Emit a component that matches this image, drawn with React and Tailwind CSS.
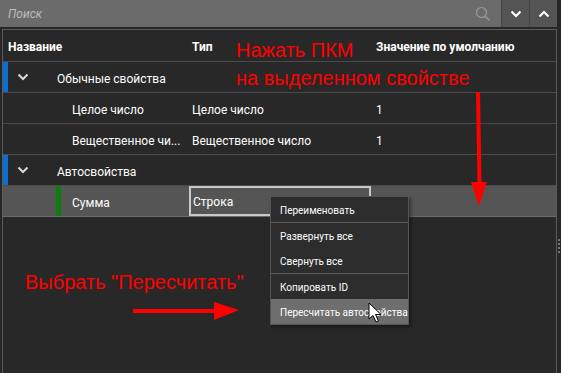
import React from "react";

const font = { fontFamily: 'Roboto, "Noto Sans", sans-serif' };

function Chevron({ up = false, className = "" }) {
  return (
    <svg width="12" height="8" viewBox="0 0 12 8" className={className}>
      <path
        d={up ? "M1.5 6.5 L6 2 L10.5 6.5" : "M1.5 1.5 L6 6 L10.5 1.5"}
        fill="none"
        stroke="currentColor"
        strokeWidth="2"
      />
    </svg>
  );
}

function GroupRow({ label }) {
  return (
    <div className="flex h-[31px] items-center border-b border-[#4a4a4a]">
      <div className="h-full w-[5px] bg-[#0a6fd3]" />
      <Chevron className="ml-[9px] text-[#d8d8d8]" />
      <span className="ml-[28px] pt-[3px] text-[12px] text-white">{label}</span>
    </div>
  );
}

function ChildRow({ name, type, value }) {
  return (
    <div className="grid h-[31px] grid-cols-[186px_184px_1fr] items-center border-b border-[#4a4a4a] pt-[3px] text-[12px] text-white">
      <span className="pl-[69px] whitespace-nowrap">{name}</span>
      <span className="pl-[3px] whitespace-nowrap">{type}</span>
      <span className="pl-[3px]">{value}</span>
    </div>
  );
}

function MenuItem({ children, active = false }) {
  return (
    <div
      className={
        "flex h-[25px] items-center whitespace-nowrap pl-[9px] pt-[1px] text-[10px] " +
        (active ? "bg-[#6e6e6e] text-white" : "text-white")
      }
    >
      {children}
    </div>
  );
}

export default function App() {
  return (
    <div
      className="relative flex h-[373px] w-[561px] flex-col overflow-hidden bg-[#262626]"
      style={font}
    >
      {/* search bar */}
      <div className="flex h-[27px] shrink-0">
        <div className="flex flex-1 items-center bg-[#6b6b6b] pl-[8px] pr-[10px]">
          <span className="flex-1 text-[12px] italic text-[#bdbdbd]">Поиск</span>
          <svg width="16" height="16" viewBox="0 0 16 16" className="text-[#9a9a9a]">
            <circle cx="6.5" cy="6.5" r="5" fill="none" stroke="currentColor" strokeWidth="1.2" />
            <path d="M10.2 10.2 L14.5 14.5" stroke="currentColor" strokeWidth="1.4" />
          </svg>
        </div>
        <div className="flex w-[28px] items-center justify-center border-l border-[#444] bg-[#555]">
          <Chevron className="text-white" />
        </div>
        <div className="flex w-[28px] items-center justify-center border-l border-[#444] bg-[#555]">
          <Chevron up className="text-white" />
        </div>
        <div className="w-[4px] bg-[#262626]" />
      </div>

      {/* panel */}
      <div className="ml-[2px] mt-[2px] flex w-[555px] flex-1 flex-col border-l border-r border-t border-[#5c5c5c] bg-[#282828]">
        <div className="grid h-[32px] grid-cols-[186px_184px_1fr] items-center border-b border-[#4a4a4a] pt-[3px] text-[12px] font-bold text-white">
          <span className="pl-[5px]">Название</span>
          <span className="pl-[3px]">Тип</span>
          <span className="pl-[3px]">Значение по умолчанию</span>
        </div>
        <GroupRow label="Обычные свойства" />
        <ChildRow name="Целое число" type="Целое число" value="1" />
        <ChildRow name="Вещественное чи..." type="Вещественное число" value="1" />
        <GroupRow label="Автосвойства" />
        <div className="flex h-[31px] items-stretch border-b border-[#6a6a6a] bg-[#555555] text-[12px] text-white">
          <div className="ml-[53px] w-[5px] bg-[#0a7d0a]" />
          <div className="flex w-[128px] items-center pl-[11px] pt-[3px]">Сумма</div>
          <div className="flex w-[182px] items-center border-2 border-[#c9c9c9] pl-[2px] pt-[2px]">Строка</div>
        </div>
      </div>

      {/* scrollbar grip dots */}
      <div className="absolute left-[558px] top-[239px] flex flex-col gap-[2px]">
        <div className="h-[2px] w-[2px] bg-[#777]" />
        <div className="h-[2px] w-[2px] bg-[#777]" />
        <div className="h-[2px] w-[2px] bg-[#777]" />
        <div className="h-[2px] w-[2px] bg-[#777]" />
      </div>

      {/* context menu */}
      <div className="absolute left-[270px] top-[196px] flex w-[139px] flex-col border border-[#555] bg-[#2d2d2d] shadow-[2px_2px_3px_rgba(0,0,0,0.4)]">
        <MenuItem>Переименовать</MenuItem>
        <div className="h-px bg-[#5a5a5a]" />
        <MenuItem>Развернуть все</MenuItem>
        <MenuItem>Свернуть все</MenuItem>
        <div className="h-px bg-[#5a5a5a]" />
        <MenuItem>Копировать ID</MenuItem>
        <MenuItem active>Пересчитать автосвойства</MenuItem>
      </div>

      {/* annotations */}
      <div
        className="absolute left-[236px] top-[36px] text-[20px] leading-[28px] text-[#ff0000]"
        style={{ fontFamily: '"Liberation Sans", Arial, sans-serif' }}
      >
        <div>Нажать ПКМ</div>
        <div>на выделенном свойстве</div>
      </div>
      <div
        className="absolute left-[25px] top-[268px] text-[20px] leading-[28px] text-[#ff0000]"
        style={{ fontFamily: '"Liberation Sans", Arial, sans-serif' }}
      >
        Выбрать "Пересчитать"
      </div>

      <svg className="absolute left-0 top-0" width="561" height="373" viewBox="0 0 561 373">
        {/* vertical arrow */}
        <path d="M478 92 L479.5 184" stroke="#ff0000" strokeWidth="4" />
        <path d="M471 182 L487 182 L479 206 Z" fill="#ff0000" />
        {/* horizontal arrow */}
        <path d="M133 311 L218 311" stroke="#ff0000" strokeWidth="4" />
        <path d="M214 302 L239 310 L214 320 Z" fill="#ff0000" />
        {/* cursor */}
        <path
          d="M369 303 L369 319 L373 315.5 L376 322 L378.5 321 L375.5 314.5 L381 314.5 Z"
          fill="#ffffff"
          stroke="#000000"
          strokeWidth="1"
          strokeLinejoin="round"
        />
      </svg>
    </div>
  );
}
